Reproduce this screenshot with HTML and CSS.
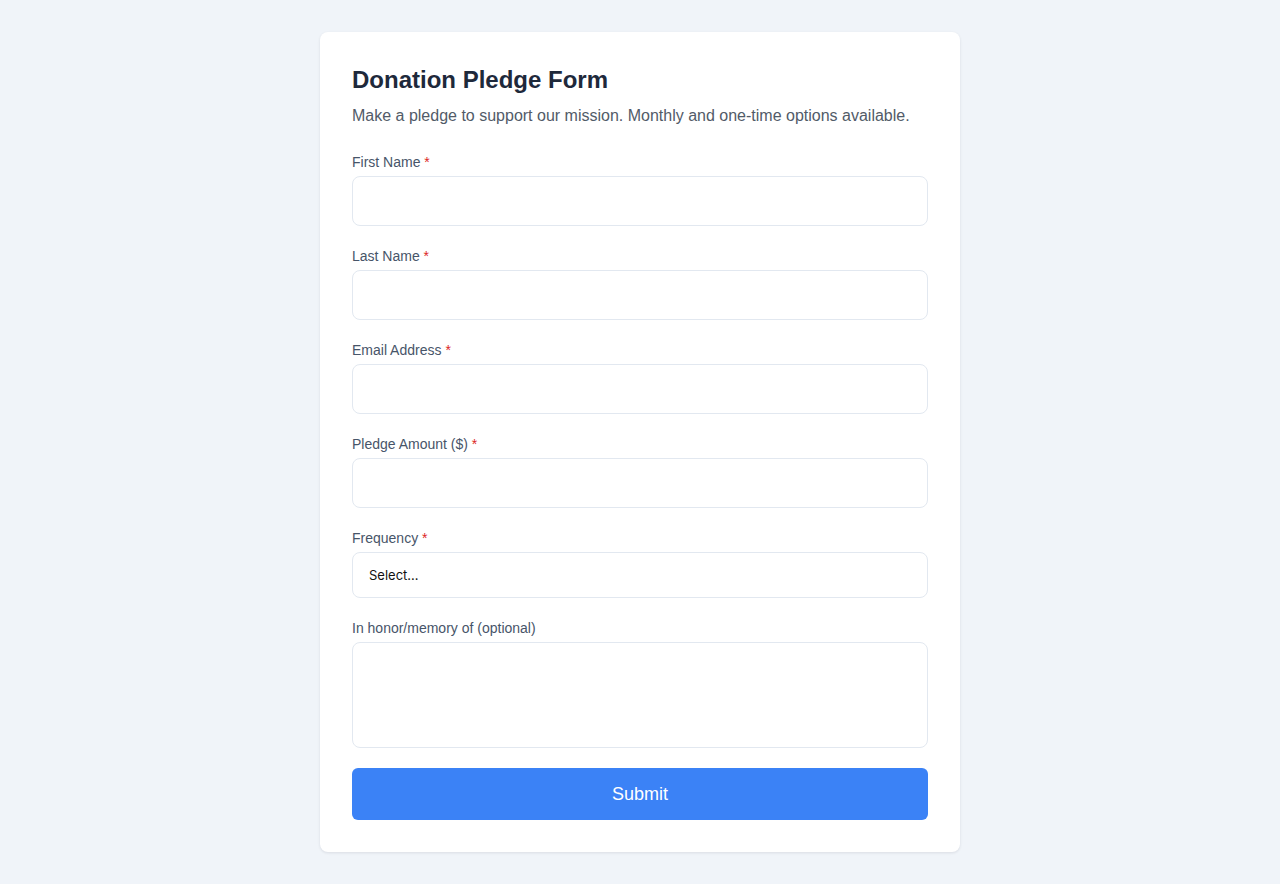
FILE: index.html
```html
<!DOCTYPE html>
<html lang="en">
<head>
<meta charset="utf-8">
<title>Donation Pledge Form</title>
<link rel="stylesheet" href="styles.css">
</head>
<body>
<main class="card">
  <h1 class="title">Donation Pledge Form</h1>
  <p class="subtitle">Make a pledge to support our mission. Monthly and one-time options available.</p>
  <form class="form">
    <div class="field">
      <label class="label">First Name <span class="req">*</span></label>
      <input class="input" type="text">
    </div>
    <div class="field">
      <label class="label">Last Name <span class="req">*</span></label>
      <input class="input" type="text">
    </div>
    <div class="field">
      <label class="label">Email Address <span class="req">*</span></label>
      <input class="input" type="email">
    </div>
    <div class="field">
      <label class="label">Pledge Amount ($) <span class="req">*</span></label>
      <input class="input" type="text">
    </div>
    <div class="field">
      <label class="label">Frequency <span class="req">*</span></label>
      <div class="select">Select…</div>
    </div>
    <div class="field">
      <label class="label">In honor/memory of (optional)</label>
      <textarea class="textarea"></textarea>
    </div>
    <button class="submit" type="button">Submit</button>
  </form>
</main>
</body>
</html>
```

FILE: styles.css
```css
* { box-sizing: border-box; }
html, body { margin: 0; padding: 0; }
body {
  background: #f0f4f9;
  font-family: "Liberation Sans", Arial, sans-serif;
  padding: 32px 0;
  min-height: 884px;
}
.card {
  width: 640px;
  margin: 0 auto;
  background: #ffffff;
  border-radius: 8px;
  padding: 32px;
  box-shadow: 0 1px 3px rgba(15, 23, 42, 0.1);
}
.title {
  margin: 0;
  font-size: 24px;
  line-height: 32px;
  font-weight: 700;
  color: #1e293b;
}
.subtitle {
  margin: 8px 0 24px;
  font-size: 16px;
  line-height: 24px;
  color: #525b68;
}
.form {
  display: flex;
  flex-direction: column;
  gap: 20px;
}
.field {
  display: flex;
  flex-direction: column;
  gap: 4px;
}
.label {
  font-size: 14px;
  line-height: 20px;
  color: #475569;
}
.req { color: #dc2626; }
.input {
  height: 50px;
  border: 1px solid #e2e8f0;
  border-radius: 8px;
  background: #fff;
  font: inherit;
}
.select {
  height: 46px;
  border: 1px solid #e2e8f0;
  border-radius: 8px;
  padding: 0 16px;
  display: flex;
  align-items: center;
  font-family: Inter, "DejaVu Sans", sans-serif;
  font-size: 13px;
  color: #111;
}
.textarea {
  height: 106px;
  border: 1px solid #e2e8f0;
  border-radius: 8px;
  resize: none;
  font: inherit;
  display: block;
}
.submit {
  height: 52px;
  border: 0;
  border-radius: 6px;
  background: #3b82f6;
  color: #fff;
  font-family: "Liberation Sans", Arial, sans-serif;
  font-size: 18px;
  cursor: pointer;
}
```
